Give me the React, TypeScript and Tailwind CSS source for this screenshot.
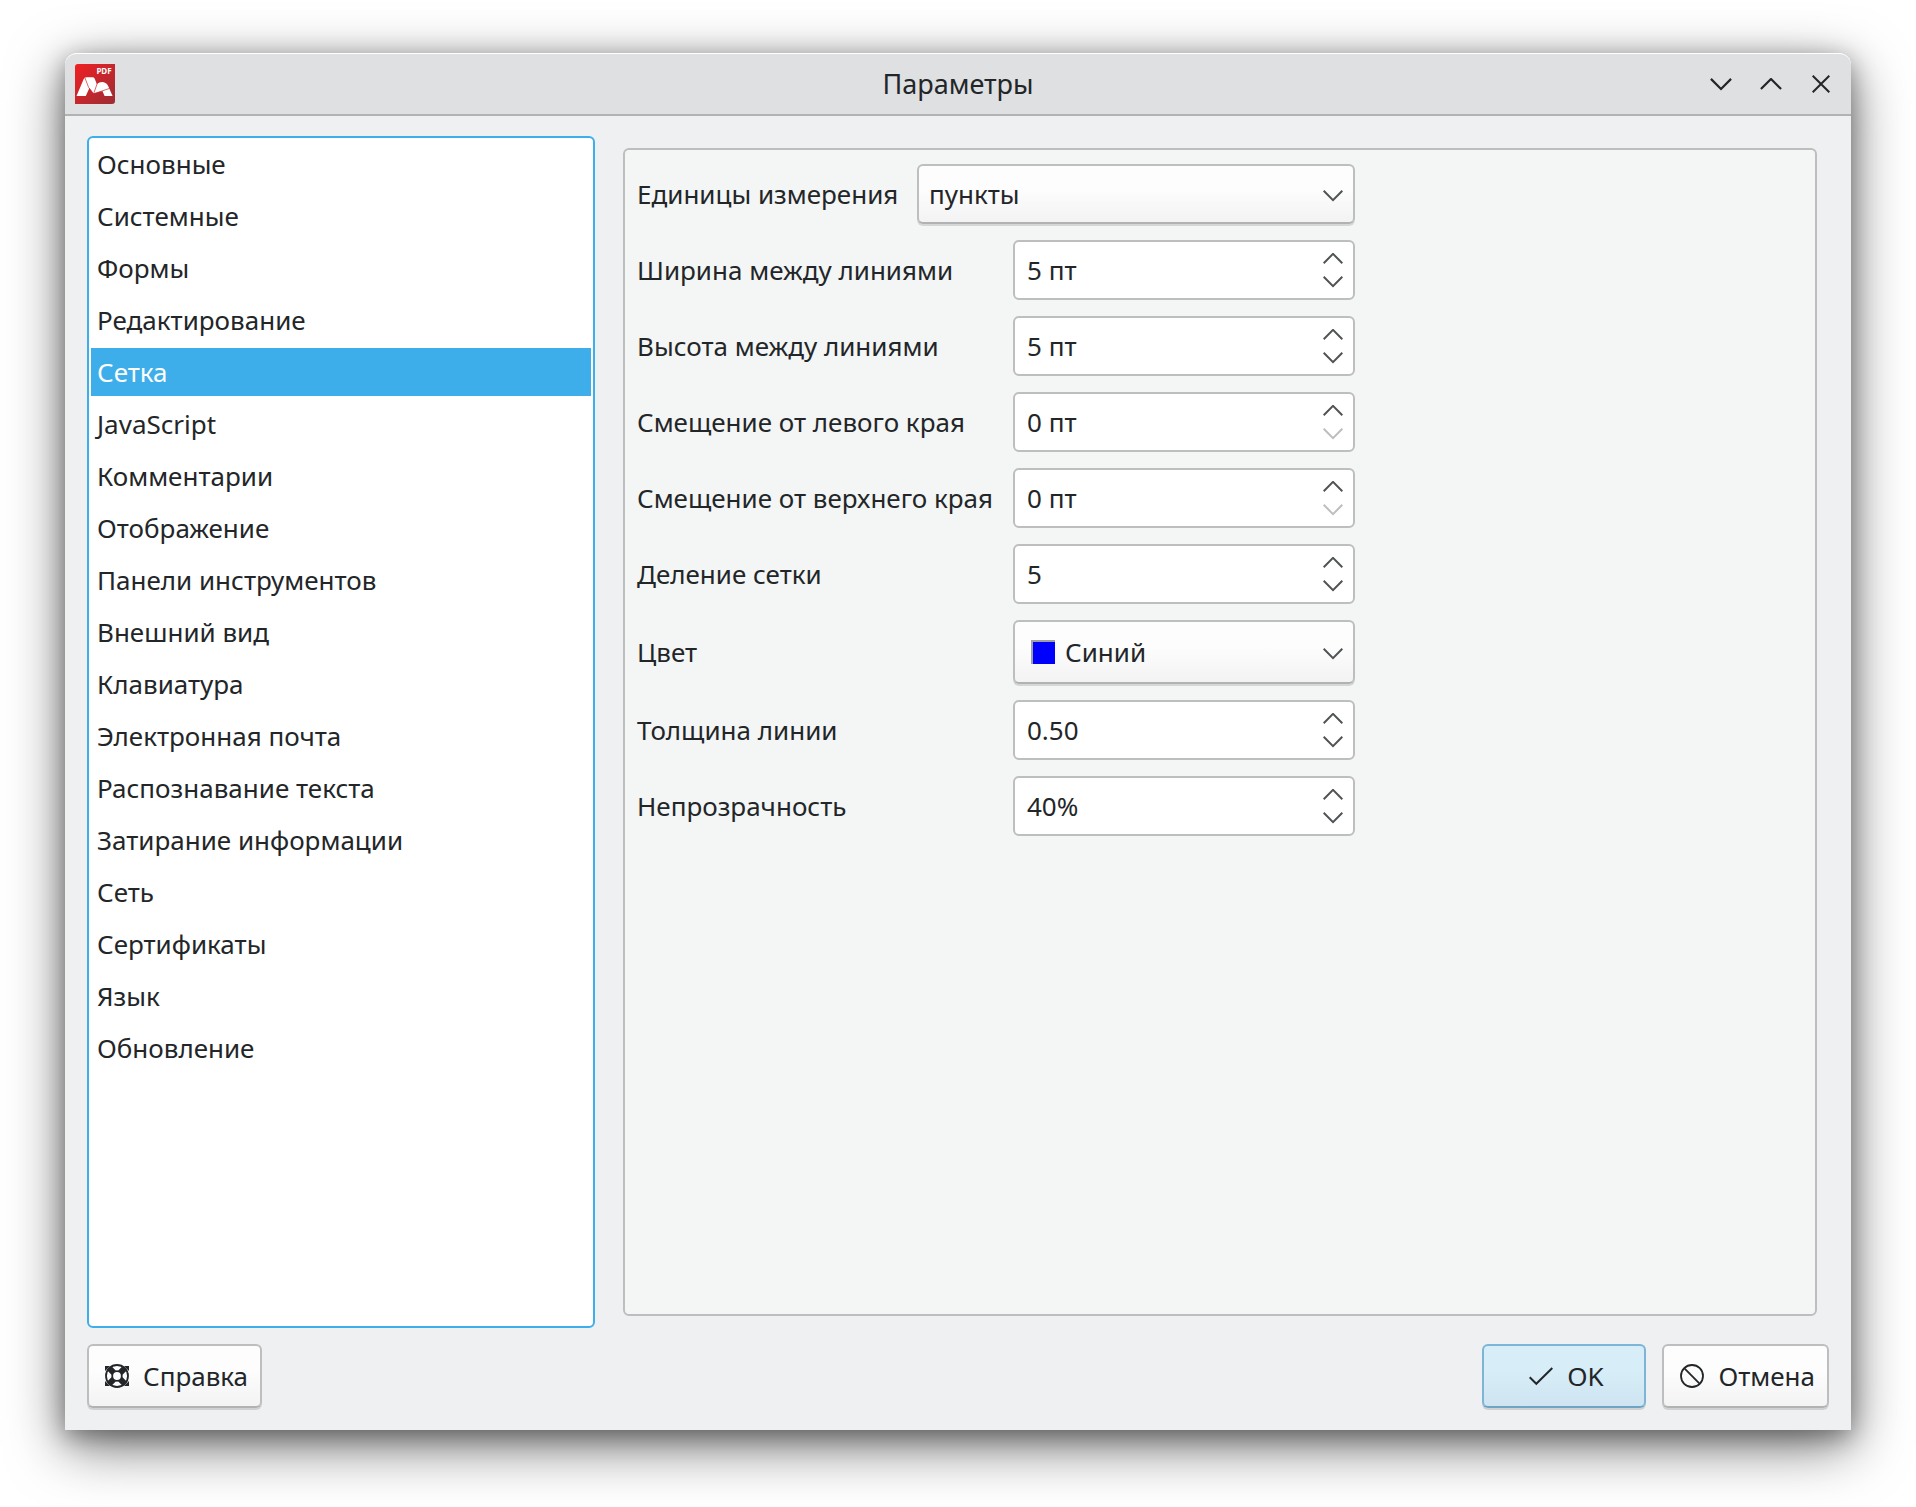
import { useState } from "react";
import type { ReactNode } from "react";
import clsx from "clsx";

const sections = [
  "Основные",
  "Системные",
  "Формы",
  "Редактирование",
  "Сетка",
  "JavaScript",
  "Комментарии",
  "Отображение",
  "Панели инструментов",
  "Внешний вид",
  "Клавиатура",
  "Электронная почта",
  "Распознавание текста",
  "Затирание информации",
  "Сеть",
  "Сертификаты",
  "Язык",
  "Обновление",
];

interface ChevronProps {
  up?: boolean;
  className?: string;
}

function Chevron({ up = false, className = "h-3 w-5" }: ChevronProps) {
  return (
    <svg
      viewBox="0 0 20 12"
      fill="none"
      stroke="currentColor"
      strokeWidth="2"
      className={className}
      aria-hidden="true"
    >
      <path d={up ? "M0.7 10.2 10 0.9l9.3 9.3" : "M0.7 0.8 10 10.1l9.3-9.3"} />
    </svg>
  );
}

function AppLogo() {
  return (
    <svg viewBox="0 0 40 40" className="size-10" aria-hidden="true">
      <defs>
        <linearGradient id="logo" x1="0" y1="0" x2="1" y2="1">
          <stop offset="0" stopColor="#f02023" />
          <stop offset="1" stopColor="#9c2d35" />
        </linearGradient>
      </defs>
      <path d="M3 0h37v37a3 3 0 0 1-3 3H0V3a3 3 0 0 1 3-3Z" fill="url(#logo)" />
      <text x="21.4" y="10.2" fontSize="8" fontWeight="700" fill="#fff" fontFamily="Noto Sans">
        PDF
      </text>
      <path
        d="M1.5 32 8.6 15.2Q9.4 13.2 11.4 13.2H17.6Q19 13.2 19.6 14.6L21.8 20Q25 17.6 28.6 18.2 31.6 18.6 33.4 22.4L37.6 32H29.6L27.4 27 18.4 29.6 14.4 24 10.8 32Z"
        fill="#fff"
      />
      <path
        d="M10 14 13.6 23.4 18.6 29.8M22.4 19 18.6 29.8 34.6 24.4"
        fill="none"
        stroke="#c9272c"
        strokeWidth="0.7"
      />
    </svg>
  );
}

function HelpIcon() {
  return (
    <svg viewBox="0 0 24 24" className="size-6" aria-hidden="true">
      <path d="M0 2h5L0 7ZM24 2h-5l5 5ZM0 22h5l-5-5ZM24 22h-5l5-5Z" fill="#232629" />
      <circle cx="12" cy="12" r="11" fill="#fcfcfc" stroke="#232629" strokeWidth="1.8" />
      <path
        d="m4.2 4.2 4.6 4.6M19.8 4.2l-4.6 4.6M4.2 19.8l4.6-4.6M19.8 19.8l-4.6-4.6"
        stroke="#232629"
        strokeWidth="6"
      />
      <circle cx="12" cy="12" r="4.8" fill="#fcfcfc" stroke="#232629" strokeWidth="1.8" />
    </svg>
  );
}

function CheckIcon() {
  return (
    <svg viewBox="0 0 24 24" fill="none" stroke="#232629" strokeWidth="2" className="size-6" aria-hidden="true">
      <path d="m0.7 13.3 6.6 6.5L23.3 4" />
    </svg>
  );
}

function CancelIcon() {
  return (
    <svg viewBox="0 0 24 24" fill="none" stroke="#232629" strokeWidth="1.8" className="size-6" aria-hidden="true">
      <circle cx="12" cy="12" r="11" />
      <path d="m4.2 4.2 15.6 15.6" />
    </svg>
  );
}

interface SpinBoxProps {
  id: string;
  label: string;
  value: string;
  atMinimum?: boolean;
}

function SpinBox({ id, label, value, atMinimum = false }: SpinBoxProps) {
  return (
    <>
      <label htmlFor={id}>{label}</label>
      <div className="flex h-[60px] items-center rounded-md border-2 border-[#bcbebf] bg-white pr-2.5">
        <input
          id={id}
          type="text"
          defaultValue={value}
          className="h-full min-w-0 flex-1 bg-transparent pl-3 outline-none"
        />
        <div className="flex flex-col text-[#4f5254]">
          <button type="button" aria-label="Увеличить" className="flex h-[23px] items-center">
            <Chevron up />
          </button>
          <button
            type="button"
            aria-label="Уменьшить"
            disabled={atMinimum}
            className="flex h-[23px] items-center disabled:text-[#bcbebf]"
          >
            <Chevron />
          </button>
        </div>
      </div>
    </>
  );
}

interface ComboBoxProps {
  id: string;
  options: string[];
  swatch?: boolean;
}

function ComboBox({ id, options, swatch = false }: ComboBoxProps) {
  return (
    <div className="relative flex-1">
      <select
        id={id}
        className={clsx(
          "block w-full appearance-none rounded-md border-2 border-[#bcbebf] border-b-[#b0b2b3] pr-12 outline-none",
          "bg-linear-to-b from-[#fdfdfd] from-40% to-[#f3f3f3] shadow-[0_2px_0_#d5d7d6]",
          swatch ? "h-16 pl-[50px]" : "h-[60px] pl-2.5"
        )}
      >
        {options.map((option) => (
          <option key={option}>{option}</option>
        ))}
      </select>
      {swatch && (
        <span className="pointer-events-none absolute top-5 left-[18px] size-6 border-t-2 border-l-2 border-[#a0a0a4] bg-[#0000ff]" />
      )}
      <Chevron className="pointer-events-none absolute top-1 right-3 bottom-0 my-auto h-3 w-5 text-[#4f5254]" />
    </div>
  );
}

interface DialogButtonProps {
  icon: ReactNode;
  children: ReactNode;
  primary?: boolean;
}

function DialogButton({ icon, children, primary = false }: DialogButtonProps) {
  return (
    <button
      type="button"
      className={clsx(
        "flex h-16 min-w-[164px] items-center justify-center gap-3.5 rounded-md border-2 pr-3 pl-4",
        "bg-linear-to-b from-40% shadow-[0_2px_0_#d0d1d2]",
        primary
          ? "border-[#7cb5d6] border-b-[#6ea5c4] from-[#d7edf8] to-[#cee4f0]"
          : "border-[#bcbebf] border-b-[#b0b2b3] from-[#fdfdfd] to-[#f3f3f3]"
      )}
    >
      {icon}
      {children}
    </button>
  );
}

export default function App() {
  const [active, setActive] = useState("Сетка");

  return (
    <div className="flex min-h-screen flex-col bg-white px-[65px] pt-[53px] pb-[77px] font-['Noto_Sans',sans-serif] text-[26px] leading-9 text-[#232629]">
      <div className="flex flex-1 flex-col rounded-t-xl bg-[#eff0f1] shadow-[0_16px_56px_rgba(0,0,0,0.55),0_6px_24px_rgba(0,0,0,0.35)]">
        {/* Title bar */}
        <header className="grid h-[63px] grid-cols-[1fr_auto_1fr] items-center rounded-t-xl border-t border-b-2 border-t-white border-b-[#b0b2b3] bg-[#dee0e2] px-2.5">
          <AppLogo />
          <h1 className="text-[27px]">Параметры</h1>
          <div className="-mr-[5px] flex items-center justify-end">
            <button type="button" aria-label="Свернуть" className="flex w-[50px] justify-center">
              <Chevron className="h-[13px] w-[22px]" />
            </button>
            <button type="button" aria-label="Развернуть" className="flex w-[50px] justify-center">
              <Chevron up className="h-[13px] w-[22px]" />
            </button>
            <button type="button" aria-label="Закрыть" className="flex w-[50px] justify-center">
              <svg viewBox="0 0 18 18" stroke="currentColor" strokeWidth="2" className="size-[18px]">
                <path d="m0.7 0.7 16.6 16.6M17.3 0.7 0.7 17.3" />
              </svg>
            </button>
          </div>
        </header>

        <div className="flex flex-1 flex-col gap-4 px-[22px] pt-5 pb-[22px]">
          <div className="flex flex-1 gap-4">
            {/* Section list */}
            <nav className="flex w-[508px] shrink-0 flex-col gap-1 rounded-md border-2 border-[#3daee9] bg-white p-0.5">
              {sections.map((section) => (
                <button
                  key={section}
                  type="button"
                  onClick={() => setActive(section)}
                  className={clsx(
                    "h-12 px-1.5 text-left",
                    section === active && "bg-[#3daee9] text-[#fcfcfc]"
                  )}
                >
                  {section}
                </button>
              ))}
            </nav>

            {/* Grid settings */}
            <form className="m-3 flex-1 rounded-md border-2 border-[#bcbebf] bg-[#f4f6f5] px-3 py-3.5">
              <div className="grid w-fit grid-cols-[360px_342px] items-center gap-4">
                <div className="col-span-2 flex items-center gap-4">
                  <label htmlFor="units" className="w-[264px] shrink-0">
                    Единицы измерения
                  </label>
                  <ComboBox id="units" options={["пункты", "миллиметры", "дюймы"]} />
                </div>
                <SpinBox id="grid-width" label="Ширина между линиями" value="5 пт" />
                <SpinBox id="grid-height" label="Высота между линиями" value="5 пт" />
                <SpinBox id="offset-left" label="Смещение от левого края" value="0 пт" atMinimum />
                <SpinBox id="offset-top" label="Смещение от верхнего края" value="0 пт" atMinimum />
                <SpinBox id="subdivisions" label="Деление сетки" value="5" />
                <label htmlFor="color">Цвет</label>
                <ComboBox id="color" options={["Синий", "Красный", "Зелёный"]} swatch />
                <SpinBox id="line-width" label="Толщина линии" value="0.50" />
                <SpinBox id="opacity" label="Непрозрачность" value="40%" />
              </div>
            </form>
          </div>

          <footer className="flex gap-4">
            <DialogButton icon={<HelpIcon />}>Справка</DialogButton>
            <div className="flex-1" />
            <DialogButton icon={<CheckIcon />} primary>
              OK
            </DialogButton>
            <DialogButton icon={<CancelIcon />}>Отмена</DialogButton>
          </footer>
        </div>
      </div>
    </div>
  );
}
